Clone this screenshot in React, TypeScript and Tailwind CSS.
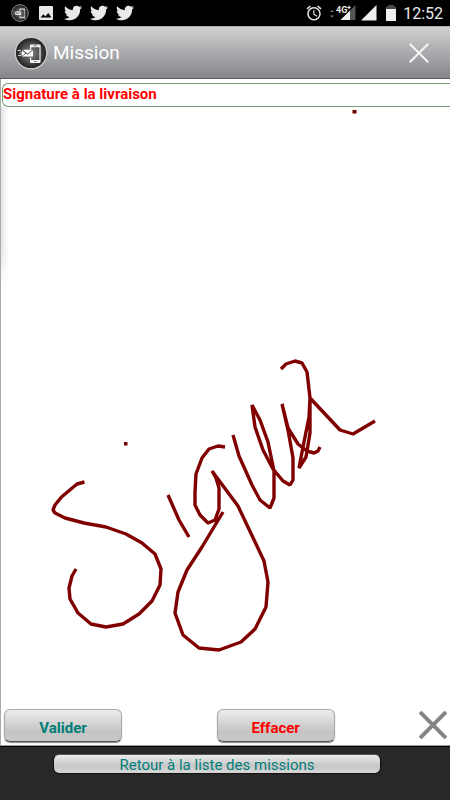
import { FaTwitter } from "react-icons/fa";
import { MdAlarm } from "react-icons/md";

function AppLogo({ className, id }: { className: string; id: string }) {
  return (
    <svg viewBox="0 0 34 34" className={className} aria-hidden="true">
      <defs>
        <radialGradient id={id}>
          <stop offset="0" stopColor="#858585" />
          <stop offset="0.55" stopColor="#505050" />
          <stop offset="1" stopColor="#1c1c1c" />
        </radialGradient>
      </defs>
      <circle cx="17" cy="17" r="15.8" fill={`url(#${id})`} stroke="#c9c9c9" strokeWidth="1.4" />
      <path
        fillRule="evenodd"
        fill="#f4f4f4"
        d="M17 8.500h8.600q1 0 1 1v16.500q0 1-1 1H17q-1 0-1-1v-4.500h1.200V24h8.200V11.300h-8.200V13.500H16V9.500q0-1 1-1zM19.500 9.600v.6h3.500v-.6zM20.500 25v.9h1.600V25z"
      />
      <path fill="#fff" d="M8.600 13.800h9.800l-4.700 3.600zM8 14.600l3.300 2.600-3.700 3zM19 14.300v6.300H8l4.200-2.900 1.500 1.200z" />
      <path d="M3.500 14.500h3.500M5.500 17h2.500M4 19.500h3" stroke="#ddd" strokeWidth="0.9" />
    </svg>
  );
}

function StatusBar() {
  return (
    <div className="flex h-[26px] shrink-0 items-center bg-black pr-[7px] pl-[11px] text-[#e8e8e8]">
      <AppLogo id="logo-small" className="size-[18px] opacity-90" />
      <svg viewBox="0 0 14 14" className="ml-[10px] size-[14px]" aria-hidden="true">
        <path fillRule="evenodd" fill="currentColor" d="M1 0h12q1 0 1 1v12q0 1-1 1H1q-1 0-1-1V1q0-1 1-1zM1.500 11.500h11L9.200 7 6.300 10.500 4.500 8.300z" />
      </svg>
      <div className="ml-[11px] flex gap-2">
        <FaTwitter className="size-[18px]" />
        <FaTwitter className="size-[18px]" />
        <FaTwitter className="size-[18px]" />
      </div>
      <MdAlarm className="ml-auto size-[18px]" />
      <svg viewBox="0 0 28 18" className="ml-[5px] h-[18px] w-7" aria-label="4G+">
        <path d="M2 8 4 6 6 8zM2 11.500 4 13.500 6 11.500z" fill="#777" />
        <path d="M12.500 16 27.500 1V16z" fill="#555" />
        <path d="M12.500 16 22 6.500V16z" fill="#eee" />
        <text x="8" y="8.500" fontSize="9" fontWeight="700" fontFamily="Roboto, sans-serif" fill="#eee" stroke="#000" strokeWidth="1" paintOrder="stroke">
          4G
        </text>
        <path d="M19.300 3.500h3.400M21 1.800v3.400" stroke="#eee" strokeWidth="1.2" />
      </svg>
      <svg viewBox="0 0 16 16" className="ml-[5px] size-4" aria-hidden="true">
        <path d="M0 15.500 15.500 0V15.500z" fill="#f0f0f0" />
      </svg>
      <svg viewBox="0 0 12 16" className="ml-2 h-4 w-3" aria-hidden="true">
        <path d="M3 0h6v1.500h2V5H1V1.500h2z" fill="#484848" />
        <path d="M1 4h10v12H1z" fill="#f0f0f0" />
      </svg>
      <span className="ml-[6px] pt-[2px] text-[16px] leading-6">12:52</span>
    </div>
  );
}

function Cross({ className, width }: { className: string; width: number }) {
  return (
    <svg viewBox="0 0 28 28" className={className} aria-hidden="true">
      <path d="M1 1 27 27M27 1 1 27" stroke="currentColor" strokeWidth={width} />
    </svg>
  );
}

const strokes = [
  "84.500,482 77,484 61.500,497 55,505 53,510 55,513 65,518 84,523 106,527 126,534 142,543 155,554 161,569 160,585 152,601 139,614 123,624 106,627 91,624 78,613 70,599 69,588 72,576 76,569",
  "168,495 179,520 189,537",
  "225,447 218,446 209,449 202,458 196,474 195,492 195,505 200,515 208,523 215,520 219,509 219,488 216,478 212,471 238,506 264,561 268,582 266,607 255,629 241,642 219,650 199,648 183,635 175,613 178,592 187,570 202,547 223,512",
  "233,435 239,456 252,485 260,500 270,508 274,498 274,471 268,442 260,420 252,405 255,427 263,450 273,469 283,481 290,485 293,480 293,458 288,430 282,404 288,428 298,444 307,451 314,453 318,451 320,447",
  "281,369 286,364 295,361 302,363 307,372 310,398 310,433 306,457 299,468 303,447 309,417 310,398 340,430 353,434 375,421",
];

function SignaturePad() {
  return (
    <div className="relative min-h-[400px] flex-1">
      <div className="absolute top-0 left-0 h-[180px] w-2 bg-linear-to-r from-black/10 to-transparent mask-b-from-80%" />
      <svg viewBox="1 107 449 600" className="absolute inset-0 size-full" role="img" aria-label="Signature">
        <g fill="none" stroke="#800000" strokeWidth="3.400" strokeLinejoin="bevel">
          {strokes.map((points) => (
            <polyline key={points} points={points} />
          ))}
        </g>
        <path d="M352.500 110h4v3.500h-4zM124 442h3.500v3.500H124z" fill="#700000" />
      </svg>
    </div>
  );
}

const raised =
  "h-[33px] w-[118px] rounded-[6px] border border-[#aaa] border-b-[#555] bg-linear-to-b from-[#ececec] via-[#c4c4c4] via-70% to-[#c8c8c8] pt-1 text-[15px] leading-5 font-bold shadow-[0_1px_1px_#888]";

export default function App() {
  return (
    <div className="flex min-h-screen flex-col bg-[#282828] font-[Roboto,'Liberation_Sans',sans-serif]">
      <StatusBar />
      <header className="flex h-[53px] shrink-0 items-center border-t border-b border-t-[#b0b0b0] border-b-[#5c5d62] bg-linear-to-b from-[#d0d1d2] to-[#85868a] pr-[21px] pl-[14px]">
        <AppLogo id="logo-large" className="size-[34px]" />
        <h1 className="ml-[5px] text-[19px] leading-6 text-white">Mission</h1>
        <button type="button" aria-label="Fermer" className="ml-auto text-[#f4f4f4]">
          <Cross className="size-5" width={3} />
        </button>
      </header>
      <main className="flex flex-1 flex-col border-b border-l border-b-[#999] border-l-[#aaa] bg-white pt-1">
        <h2 className="ml-[1px] h-[24px] rounded-l-[6px] border border-r-0 border-[#789b78] text-[15px] leading-[20px] font-bold text-[#f00]">
          Signature à la livraison
        </h2>
        <SignaturePad />
        <div className="grid h-[38px] shrink-0 grid-cols-[48%_1fr_auto] items-start pt-[2px] pr-[3px] pl-[3px]">
          <button type="button" className={`${raised} text-[#007d78]`}>Valider</button>
          <button type="button" className={`${raised} text-[#f00]`}>Effacer</button>
          <button type="button" aria-label="Annuler" className="flex h-8 items-center text-[#858585]">
            <Cross className="size-[28px]" width={4} />
          </button>
        </div>
      </main>
      <footer className="flex h-[54px] shrink-0 items-start justify-center border-t border-black pt-[7px] pr-4">
        <button
          type="button"
          className="h-[20px] w-[328px] rounded-[6px] border border-[#111] border-t-[#555] bg-linear-to-b from-[#ececec] via-[#c6c6c6] via-60% to-[#d8d8d8] pt-[3px] text-[15px] leading-[15px] text-[#007d78]"
        >
          Retour à la liste des missions
        </button>
      </footer>
    </div>
  );
}
